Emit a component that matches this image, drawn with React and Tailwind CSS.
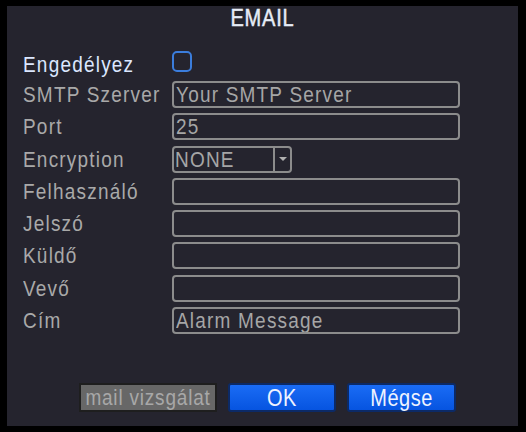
import React from "react";

const rows = [
  { label: "SMTP Szerver", value: "Your SMTP Server" },
  { label: "Port", value: "25" },
  { label: "Encryption", select: "NONE" },
  { label: "Felhasználó", value: "" },
  { label: "Jelszó", value: "" },
  { label: "Küldő", value: "" },
  { label: "Vevő", value: "" },
  { label: "Cím", value: "Alarm Message" },
];

// DVR-style text is a bit taller than plain Arial
function T({ children }) {
  return <span className="inline-block scale-y-[1.2]">{children}</span>;
}

function Field({ row }) {
  if (row.select) {
    return (
      <div className="w-[120px] h-[27px] flex border-2 border-[#8c8c8c] rounded-[4px]">
        <div className="flex-1 pl-[1px] leading-[23px] text-[19px] tracking-[1.2px] text-[#a6a6a6]"><T>{row.select}</T></div>
        <div className="w-[17px] border-l-2 border-[#8c8c8c] flex items-center justify-center">
          <div className="w-0 h-0 border-l-[4px] border-r-[4px] border-t-[4px] border-l-transparent border-r-transparent border-t-[#b0b0b0]" />
        </div>
      </div>
    );
  }
  return (
    <div className="w-[288px] h-[27px] border-2 border-[#8c8c8c] rounded-[4px] pl-[2px] leading-[23px] text-[19px] tracking-[1.2px] text-[#a6a6a6] overflow-hidden whitespace-nowrap">
      <T>{row.value}</T>
    </div>
  );
}

export default function App() {
  return (
    <div
      className="w-[526px] h-[432px] bg-black pt-[6px] pl-[7px]"
      style={{ fontFamily: '"Liberation Sans", Arial, sans-serif' }}
    >
      <div className="w-[511px] h-[420px] bg-[#25242e] flex flex-col">
        <div className="h-[22px] mt-[1px] text-center text-[20px] tracking-[0.8px] leading-[22px] text-[#e6ecf6] [-webkit-text-stroke:0.4px_#e6ecf6]">
          <T>EMAIL</T>
        </div>
        <div className="mt-[24px] pl-[16px] flex flex-col">
          <div className="flex items-start h-[27px]">
            <div className="w-[149px] text-[19px] leading-[27px] tracking-[1.2px] text-[#dbe7ff] mt-[-2px]"><T>Engedélyez</T></div>
            <div className="w-[20px] h-[21px] border-2 border-[#3b7ddc] rounded-[5px] mt-[-2px]" />
          </div>
          <div className="flex flex-col gap-y-[5.3px] mt-[1px]">
            {rows.map((row) => (
              <div key={row.label} className="flex items-center h-[27px]">
                <div className="w-[149px] text-[19px] leading-[27px] tracking-[1.2px] text-[#a9a9a9] whitespace-nowrap"><T>{row.label}</T></div>
                <Field row={row} />
              </div>
            ))}
          </div>
        </div>
        <div className="mt-auto mb-[14px] flex pl-[72px] gap-[11px]">
          <button className="w-[138px] h-[29px] bg-[#676767] border-2 border-[#1e1e1e] text-[19px] tracking-[0.8px] text-[#a8a8a8] leading-[24px]">
            <T>mail vizsgálat</T>
          </button>
          <button className="w-[108px] h-[29px] bg-gradient-to-b from-[#1a6cf5] to-[#0654e0] border-2 border-[#0c2a66] rounded-[3px] text-[20px] tracking-[0.5px] text-[#eef3ff] leading-[24px]">
            <T>OK</T>
          </button>
          <button className="w-[109px] h-[29px] bg-gradient-to-b from-[#1a6cf5] to-[#0654e0] border-2 border-[#0c2a66] rounded-[3px] text-[20px] tracking-[0.5px] text-[#eef3ff] leading-[24px]">
            <T>Mégse</T>
          </button>
        </div>
      </div>
    </div>
  );
}
